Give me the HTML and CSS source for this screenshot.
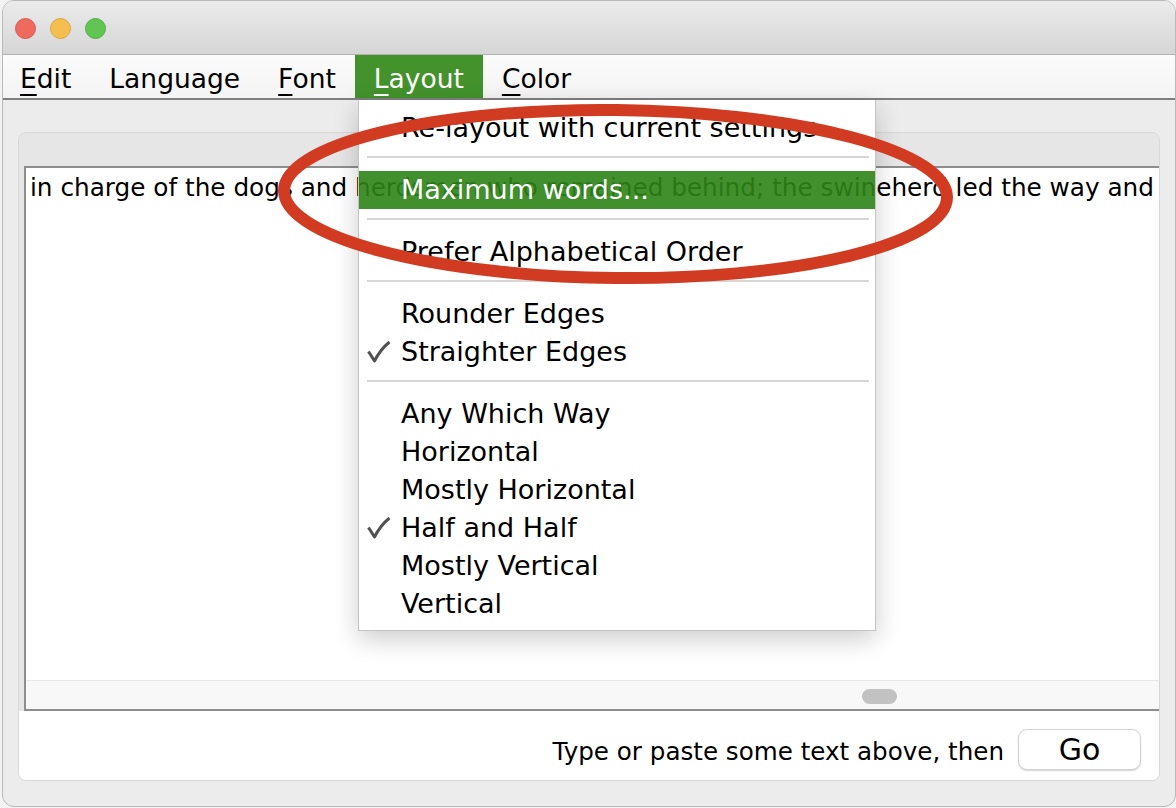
FILE: index.html
```html
<!DOCTYPE html>
<html>
<head>
<meta charset="utf-8">
<title>Word Cloud</title>
<link rel="stylesheet" href="styles.css">
</head>
<body>
<div class="window">
  <div class="titlebar">
    <span class="light red"></span>
    <span class="light yellow"></span>
    <span class="light green"></span>
  </div>
  <div class="menubar">
    <span class="mitem first"><u>E</u>dit</span>
    <span class="mitem">Language</span>
    <span class="mitem"><u>F</u>ont</span>
    <span class="mitem active"><u>L</u>ayout</span>
    <span class="mitem"><u>C</u>olor</span>
  </div>
  <div class="content">
    <div class="panel">
      <div class="panel-body">
        <div class="scrollpane">
          <div class="textarea">in charge of the dogs and herdsmen who remained behind; the swineherd led the way and his master followed after, looking like a broken-down old tramp</div>
          <div class="hscroll"><div class="thumb"></div></div>
        </div>
      </div>
      <div class="footer">
        <span class="hint">Type or paste some text above, then</span>
        <button class="go">Go</button>
      </div>
    </div>
  </div>

  <div class="popup">
    <div class="pad-top"></div>
    <div class="item"><span class="gutter"></span>Re-layout with current settings</div>
    <div class="sep"></div>
    <div class="item selected"><span class="gutter"></span>Maximum words...</div>
    <div class="sep"></div>
    <div class="item"><span class="gutter"></span>Prefer Alphabetical Order</div>
    <div class="sep"></div>
    <div class="item"><span class="gutter"></span>Rounder Edges</div>
    <div class="item"><span class="gutter"><svg class="check" viewBox="0 0 24 22" width="24" height="22"><path d="M1.5 10.5 L7.5 20 C11 13 15.5 6.5 22.5 1" fill="none" stroke="#505050" stroke-width="3" stroke-linejoin="round"/></svg></span>Straighter Edges</div>
    <div class="sep"></div>
    <div class="item"><span class="gutter"></span>Any Which Way</div>
    <div class="item"><span class="gutter"></span>Horizontal</div>
    <div class="item"><span class="gutter"></span>Mostly Horizontal</div>
    <div class="item"><span class="gutter"><svg class="check" viewBox="0 0 24 22" width="24" height="22"><path d="M1.5 10.5 L7.5 20 C11 13 15.5 6.5 22.5 1" fill="none" stroke="#505050" stroke-width="3" stroke-linejoin="round"/></svg></span>Half and Half</div>
    <div class="item"><span class="gutter"></span>Mostly Vertical</div>
    <div class="item"><span class="gutter"></span>Vertical</div>
    <div class="pad-bottom"></div>
  </div>
</div>

<svg class="annotation" width="1176" height="808" viewBox="0 0 1176 808">
  <ellipse cx="615.5" cy="194" rx="331.5" ry="84" fill="none" stroke="#d13b22" stroke-width="12" transform="rotate(0.6 615.5 194)"/>
</svg>
</body>
</html>
```

FILE: styles.css
```css
html, body {
  margin: 0;
  padding: 0;
}

body {
  position: relative;
  width: 1176px;
  height: 808px;
  overflow: hidden;
  background: #f3f3f3;
  font-family: "DejaVu Sans", "Liberation Sans", sans-serif;
  color: #000;
}

.window {
  position: relative;
  box-sizing: border-box;
  width: 1174px;
  height: 807px;
  margin-left: 2px;
  border: 1px solid #b9b9b9;
  border-radius: 12px;
  overflow: hidden;
  display: flex;
  flex-direction: column;
  background: #ececec;
}

/* title bar */
.titlebar {
  box-sizing: border-box;
  height: 54px;
  flex: none;
  border-bottom: 1px solid #b2b2b2;
  background: linear-gradient(#ebebeb, #d6d6d6);
  display: flex;
  align-items: flex-start;
  gap: 14px;
  padding: 17px 0 0 12px;
}

.light {
  box-sizing: border-box;
  width: 21px;
  height: 21px;
  border-radius: 50%;
}
.light.red { background: #ee6a5f; border: 1px solid #d65a4f; }
.light.yellow { background: #f5bf4f; border: 1px solid #d9a441; }
.light.green { background: #61c554; border: 1px solid #52ab44; }

/* menu bar */
.menubar {
  box-sizing: border-box;
  height: 45px;
  flex: none;
  border-bottom: 2px solid #7f7f7f;
  background: linear-gradient(#fbfbfb, #f4f4f4);
  display: flex;
  align-items: stretch;
  font-size: 26.5px;
}

.mitem {
  padding: 5px 19px 0;
  line-height: 38px;
  white-space: nowrap;
}

.mitem.first {
  padding-left: 17px;
}

.mitem u {
  text-decoration-thickness: 2px;
  text-underline-offset: 6px;
}

.mitem.active {
  background: #43922c;
  color: #fff;
}

/* content */
.content {
  flex: 1;
  padding: 32px 15px 0 15px;
}

.panel {
  box-sizing: border-box;
  height: 649px;
  border: 1px solid #d8d8d8;
  border-radius: 8px;
  overflow: hidden;
  display: flex;
  flex-direction: column;
  background: #e6e6e6;
}

.panel-body {
  flex: 1;
  display: flex;
  padding: 33px 3px 0 5px;
  background: #e6e6e6;
}

.scrollpane {
  flex: 1;
  display: flex;
  flex-direction: column;
  border: 2px solid #8e8e8e;
  border-right-color: #9a9a9a;
  background: #fff;
}

.textarea {
  flex: 1;
  padding: 5px 0 0 4px;
  font-size: 24.72px;
  line-height: 30px;
  white-space: nowrap;
  overflow: hidden;
}

.hscroll {
  box-sizing: border-box;
  height: 29px;
  flex: none;
  border-top: 1px solid #e7e7e7;
  background: #f8f8f8;
  display: flex;
  align-items: center;
  padding-top: 2px;
}

.thumb {
  width: 35px;
  height: 15px;
  border-radius: 8px;
  background: #c2c2c2;
  margin-left: 836px;
}

.footer {
  box-sizing: border-box;
  height: 69px;
  flex: none;
  background: #fff;
  display: flex;
  justify-content: flex-end;
  align-items: center;
  gap: 14px;
  padding: 18px 18px 10px 0;
}

.hint {
  font-size: 24.6px;
  line-height: 30px;
  padding-top: 4px;
}

.go {
  box-sizing: border-box;
  width: 123px;
  height: 41px;
  padding: 0;
  border: 1px solid #d3d3d3;
  border-radius: 9px;
  background: #fff;
  box-shadow: 0 1px 1.5px rgba(0, 0, 0, 0.18);
  font-family: "DejaVu Sans", "Liberation Sans", sans-serif;
  font-size: 30px;
  line-height: 39px;
  color: #000;
}

/* popup menu */
.popup {
  position: absolute;
  left: 355px;
  top: 99px;
  box-sizing: border-box;
  width: 518px;
  border: 1px solid #c4c4c4;
  border-top: none;
  box-shadow: 0 8px 24px rgba(0, 0, 0, 0.2);
  font-size: 27px;
}

.pad-top {
  height: 9px;
  background: #fff;
}

.pad-bottom {
  height: 7px;
  background: #fff;
}

.item {
  height: 38px;
  line-height: 38px;
  display: flex;
  align-items: center;
  background: #fff;
  white-space: nowrap;
}

.item.selected {
  background: rgba(44, 132, 22, 0.9);
  color: #fff;
}

.gutter {
  width: 42px;
  flex: none;
  box-sizing: border-box;
  padding-left: 8px;
  display: flex;
  align-items: center;
}

.check {
  display: block;
}

.sep {
  box-sizing: border-box;
  height: 24px;
  padding: 9px 6px 0 8px;
  background: #fff;
}

.sep::before {
  content: "";
  display: block;
  height: 2px;
  background: #d6d6d6;
}

/* annotation overlay */
.annotation {
  position: absolute;
  left: 0;
  top: 0;
  pointer-events: none;
}
```
